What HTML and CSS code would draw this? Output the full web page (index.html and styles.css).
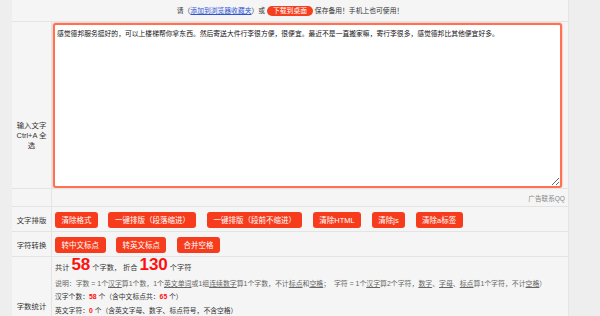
FILE: index.html
```html
<!DOCTYPE html>
<html lang="zh-CN">
<head>
    <meta charset="UTF-8">
    <meta name="viewport" content="width=device-width, initial-scale=1.0">
    <title>字数统计</title>
    <link rel="stylesheet" href="styles.css">
</head>
<body>
    <div class="container">
        <div class="notice">
            请（<a href="#" class="fav">添加到浏览器收藏夹</a>）或 <span class="pill">下载到桌面</span> 保存备用！手机上也可使用！
        </div>
        <table class="tool">
            <tr>
                <td class="label label-input">输入文字<br>Ctrl+A 全<br>选</td>
                <td class="cell-text">
                    <textarea id="content">感觉德邦服务挺好的，可以上楼梯帮你拿东西。然后寄送大件行李很方便，很便宜。最近不是一直搬家嘛，寄行李很多，感觉德邦比其他便宜好多。</textarea>
                </td>
            </tr>
            <tr>
                <td class="label"></td>
                <td class="ad">广告联系QQ</td>
            </tr>
            <tr>
                <td class="label">文字排版</td>
                <td class="buttons">
                    <button>清除格式</button>
                    <button>一键排版（段落缩进）</button>
                    <button>一键排版（段前不缩进）</button>
                    <button>清除HTML</button>
                    <button>清除js</button>
                    <button>清除a标签</button>
                </td>
            </tr>
            <tr>
                <td class="label">字符转换</td>
                <td class="buttons">
                    <button>转中文标点</button>
                    <button>转英文标点</button>
                    <button>合并空格</button>
                </td>
            </tr>
            <tr>
                <td class="label">字数统计</td>
                <td class="stats">
                    <p class="total">共计 <span class="big">58</span> 个字数， 折合 <span class="big">130</span> 个字符</p>
                    <p class="note">说明：字数 = 1个<u>汉字</u>算1个数，1个<u>英文单词</u>或1组<u>连续数字</u>算1个字数，不计<u>标点</u>和<u>空格</u>； &nbsp;字符 = 1个<u>汉字</u>算2个字符，<u>数字</u>、<u>字母</u>、<u>标点</u>算1个字符，不计<u>空格</u>）</p>
                    <p class="line">汉字个数：<b>58</b> 个（含中文标点共：<b>65</b> 个）</p>
                    <p class="line">英文字符：<b>0</b> 个（含英文字母、数字、标点符号，不含空格）</p>
                </td>
            </tr>
        </table>
    </div>
</body>
</html>
```

FILE: styles.css
```css
body {
    margin: 0;
    padding: 0;
    background-color: #efeeee;
    font-family: "Liberation Sans", "Noto Sans CJK SC", sans-serif;
    color: #333;
}

.container {
    width: 556px;
    margin-left: 12px;
    background-color: #f5f5f5;
    border-right: 1px solid #e6e6e6;
    min-height: 316px;
}

.notice {
    height: 21px;
    line-height: 21px;
    text-align: center;
    font-size: 6.8px;
    color: #333;
}

.fav {
    color: #2f55d4;
    text-decoration: underline;
}

.pill {
    display: inline-block;
    background-color: #f5401f;
    color: white;
    padding: 0 6px;
    line-height: 10px;
    border-radius: 5px;
}

.tool {
    width: 100%;
    border-collapse: collapse;
}

.tool td {
    border-top: 1px solid #e4e4e4;
    padding: 0;
}

.label {
    width: 39px;
    border-right: 1px solid #e4e4e4;
    text-align: center;
    font-size: 7.4px;
    color: #333;
}

.label-input {
    vertical-align: top;
    padding-top: 99px !important;
    line-height: 10px;
}

.cell-text {
    height: 166px;
    vertical-align: top;
}

textarea {
    display: block;
    box-sizing: border-box;
    width: 509px;
    height: 165px;
    margin: 1px 0 0 1px;
    padding: 3px 2px;
    border: 2px solid #ff7152;
    border-radius: 3px;
    box-shadow: 0 0 2px rgba(255, 80, 50, 0.7);
    font-family: "Liberation Sans", "Noto Sans CJK SC", sans-serif;
    font-size: 6.8px;
    color: #111;
    resize: vertical;
    outline: none;
}

.ad {
    height: 17px;
    text-align: right;
    padding-right: 3px !important;
    font-size: 6.6px;
    color: #888;
}

.buttons {
    height: 24px;
    padding-left: 3px !important;
}

button {
    height: 16px;
    margin: 0 3px 0 0;
    padding: 0 6.5px;
    border: none;
    border-radius: 3px;
    background-color: #f63c1c;
    color: white;
    font-family: "Liberation Sans", "Noto Sans CJK SC", sans-serif;
    font-size: 7.5px;
    vertical-align: middle;
    cursor: pointer;
}

button + button {
    margin-left: 3px;
}

.stats {
    padding: 0 0 37px 3px !important;
    vertical-align: top;
}

.stats p {
    margin: 0;
}

.total {
    font-size: 7.2px;
    line-height: 15px;
}

.big {
    font-size: 17px;
    font-weight: bold;
    line-height: 15px;
    color: #ff1010;
}

.note {
    font-size: 6.9px;
    color: #666;
    line-height: 13px;
    margin-top: 2px !important;
}

.line {
    font-size: 6.8px;
    color: #333;
    line-height: 13.5px;
}

.line b {
    color: #ff1010;
}
```
